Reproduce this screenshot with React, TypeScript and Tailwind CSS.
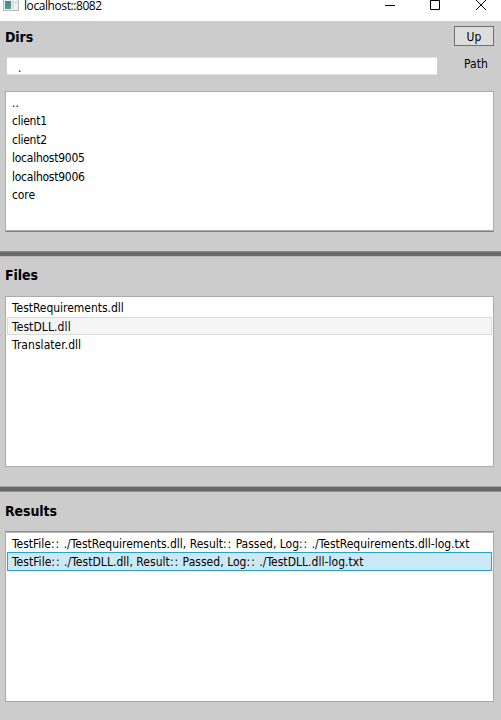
import React from "react";

const dirs = [
  { name: "..", style: "h-[18px]" },
  { name: "client1", style: "h-[19px] tracking-[-0.25px]" },
  { name: "client2", style: "h-[18px] tracking-[-0.25px]" },
  { name: "localhost9005", style: "h-[19px] tracking-[-0.25px]" },
  { name: "localhost9006", style: "h-[18px] tracking-[-0.25px]" },
  { name: "core", style: "h-[19px] tracking-[-0.1px]" },
];

const label = "font-['DejaVu_Sans_Condensed','DejaVu_Sans',sans-serif] [font-stretch:condensed] text-[12px] whitespace-pre";

function Heading({ children }: { children: React.ReactNode }) {
  return (
    <h2 className="font-['DejaVu_Sans_Condensed','DejaVu_Sans',sans-serif] [font-stretch:condensed] text-[14px] leading-[20px] font-bold tracking-[-0.1px]">
      {children}
    </h2>
  );
}

function Colons() {
  return <span className="tracking-[1px]">::</span>;
}

function Result({ file }: { file: string }) {
  return (
    <>
      TestFile<Colons /> ./{file}, Result<Colons /> Passed, Log<Colons /> ./{file}-log.txt
    </>
  );
}

function TitleBar() {
  return (
    <header className="flex h-[21px] shrink-0 items-start bg-white">
      <svg className="ml-[3px] shrink-0" width="16" height="11" viewBox="0 0 16 11" shapeRendering="crispEdges">
        <defs>
          <linearGradient id="pane" x1="0" y1="0" x2="0" y2="1">
            <stop offset="0" stopColor="#4f7fa0" />
            <stop offset="1" stopColor="#53a573" />
          </linearGradient>
        </defs>
        <path d="M0 0H16V11H0Z" fill="#b5b7b9" />
        <path d="M1 0H15V10H1Z" fill="#edf0f2" />
        <path d="M2 1H8V9H2Z" fill="url(#pane)" />
        <path d="M9 1H11V9H9Z" fill="#d8dde1" />
        <path d="M12 1H14V4H12Z" fill="#d8e3da" />
      </svg>
      <span className="ml-[5px] font-['Open_Sans',sans-serif] text-[12px] leading-[12px] tracking-[-0.42px]">localhost::8082</span>
      <svg className="ml-auto mr-[14px] shrink-0" width="102" height="11" viewBox="0 0 102 11" fill="none" stroke="#000">
        <path d="M0 5.5H10" />
        <path d="M45.5 .5H54.5V9.5H45.5Z" />
        <path d="M91 0L101 10M101 0L91 10" />
      </svg>
    </header>
  );
}

export default function App() {
  return (
    <main className="flex h-[720px] w-[501px] flex-col overflow-hidden bg-[#cccccc] text-black">
      <TitleBar />
      <section className="flex h-[230px] shrink-0 flex-col pr-[7px] pl-[5px]">
        <div className="flex h-[36px] items-start justify-between pt-[5px]">
          <div className="pt-[1px]"><Heading>Dirs</Heading></div>
          <button className={`${label} h-[20px] w-[40px] border border-[#707070] bg-[#dddddd] pt-px leading-[18px]`}>Up</button>
        </div>
        <div className="flex h-[18px] justify-between pr-[6px] pl-[2px]">
          <div className={`${label} h-[18px] w-[430px] border-y border-[#e3e3e3] bg-white pl-[11px] leading-[20px]`}>.</div>
          <span className={`${label} leading-[15px] tracking-[0.1px]`}>Path</span>
        </div>
        <ul className={`${label} mt-[16px] h-[141px] border border-[#abadb3] border-b-[#808080] bg-white px-[6px] pt-[2px] leading-[18px] shadow-[inset_0_-1px_#aaaaaa]`}>
          {dirs.map((d) => (
            <li key={d.name} className={d.style}>{d.name}</li>
          ))}
        </ul>
      </section>
      <div className="h-[6px] shrink-0 border-t border-b border-t-[#8c8c8c] border-b-[#b8b8b8] bg-[#696969]" />
      <section className="flex h-[229px] shrink-0 flex-col pt-[8px] pr-[7px] pl-[5px]">
        <Heading>Files</Heading>
        <ul className={`${label} mt-[11px] h-[171px] border border-[#ababab] bg-white px-px pt-px leading-[20px]`}>
          <li className="h-[19px] px-[5px] tracking-[-0.03px]">TestRequirements.dll</li>
          <li className="h-[18px] border border-[#dadada] bg-[#f5f5f5] px-[4px] leading-[18px] tracking-[0.1px]">TestDLL.dll</li>
          <li className="h-[18px] px-[5px] tracking-[0.05px]">Translater.dll</li>
        </ul>
      </section>
      <div className="h-[6px] shrink-0 border-t border-b border-t-[#a4a4a4] border-b-[#909090] bg-[#696969]" />
      <section className="flex flex-1 flex-col pt-[9px] pr-[7px] pl-[5px]">
        <Heading>Results</Heading>
        <ul className={`${label} mt-[10px] h-[171px] border border-[#ababab] border-t-[#909090] bg-white px-px pt-[2px] leading-[20px] shadow-[inset_0_1px_#b8b8b8]`}>
          <li className="h-[18px] px-[5px] tracking-[-0.01px]"><Result file="TestRequirements.dll" /></li>
          <li className="h-[19px] border border-[#26a0da] bg-[#cbe8f6] px-[4px] leading-[18px] tracking-[0.04px]"><Result file="TestDLL.dll" /></li>
        </ul>
      </section>
    </main>
  );
}
